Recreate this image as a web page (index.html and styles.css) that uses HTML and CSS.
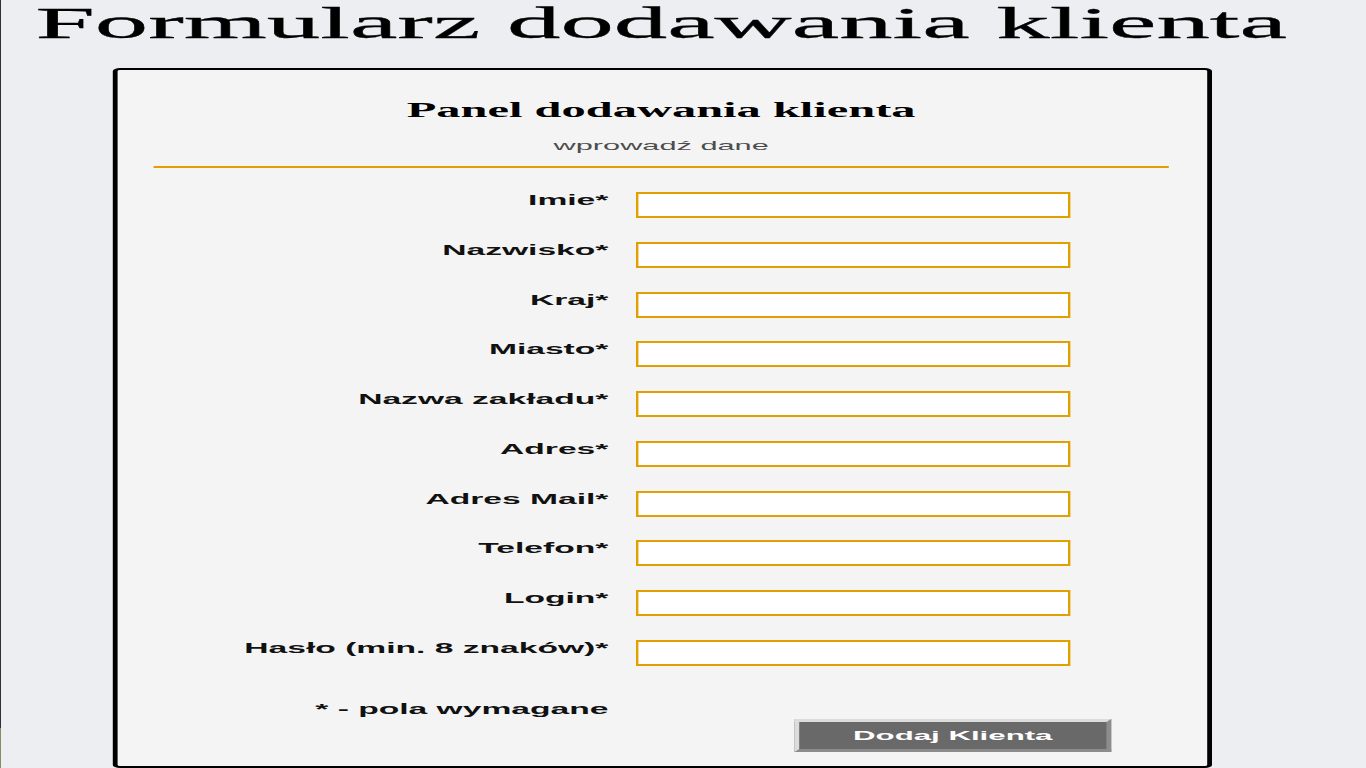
FILE: index.html
```html
<!DOCTYPE html>
<html lang="pl">
<head>
<meta charset="utf-8">
<title>Formularz dodawania klienta</title>
<link rel="stylesheet" href="styles.css">
</head>
<body>
<div class="stage">
  <h1 class="page-title">Formularz dodawania klienta</h1>
  <form class="panel" action="#">
    <h2 class="panel-title">Panel dodawania klienta</h2>
    <p class="panel-sub">wprowadź dane</p>
    <div class="divider"></div>
    <div class="fields">
      <label class="field-label" for="f-imie">Imie*</label>
      <input class="field-input" id="f-imie" type="text">
      <label class="field-label" for="f-nazwisko">Nazwisko*</label>
      <input class="field-input" id="f-nazwisko" type="text">
      <label class="field-label" for="f-kraj">Kraj*</label>
      <input class="field-input" id="f-kraj" type="text">
      <label class="field-label" for="f-miasto">Miasto*</label>
      <input class="field-input" id="f-miasto" type="text">
      <label class="field-label" for="f-zaklad">Nazwa zakładu*</label>
      <input class="field-input" id="f-zaklad" type="text">
      <label class="field-label" for="f-adres">Adres*</label>
      <input class="field-input" id="f-adres" type="text">
      <label class="field-label" for="f-mail">Adres Mail*</label>
      <input class="field-input" id="f-mail" type="text">
      <label class="field-label" for="f-telefon">Telefon*</label>
      <input class="field-input" id="f-telefon" type="text">
      <label class="field-label" for="f-login">Login*</label>
      <input class="field-input" id="f-login" type="text">
      <label class="field-label" for="f-haslo">Hasło (min. 8 znaków)*</label>
      <input class="field-input" id="f-haslo" type="password">
    </div>
    <div class="form-foot">
      <p class="required-note">* - pola wymagane</p>
      <button type="submit" class="submit-btn">Dodaj Klienta</button>
    </div>
  </form>
</div>
</body>
</html>
```

FILE: styles.css
```css
html,
body {
  margin: 0;
  height: 100%;
}

body {
  overflow: hidden;
  background:
    linear-gradient(#2d3038, #2d3038) 0 0 / 1px 728px no-repeat,
    linear-gradient(#8b8a62, #8b8a62) 0 728px / 1px 40px no-repeat,
    #edeef2;
  font-family: "Liberation Sans", Arial, sans-serif;
  color: #111;
}

/* the page is rendered narrow and stretched horizontally, as in the capture */
.stage {
  width: 551px;
  transform: scaleX(2.4);
  transform-origin: 0 0;
}

.page-title {
  margin: -1px 0 0;
  font: 400 44.5px/48px "Liberation Serif", "Times New Roman", serif;
  text-align: center;
  color: #000;
  -webkit-text-stroke: 0.3px #000;
}

.panel {
  box-sizing: border-box;
  width: 458px;
  height: 700px;
  margin: 21px auto 0;
  border: 2px solid #000;
  border-radius: 3px;
  background: #f4f4f4;
}

.panel-title {
  margin: 29px 0 0;
  font: 700 20.2px/23px "Liberation Serif", "Times New Roman", serif;
  text-align: center;
  color: #000;
}

.panel-sub {
  margin: 17px 0 0;
  font-size: 12.8px;
  line-height: 14px;
  text-align: center;
  color: #4d4d4d;
}

.divider {
  width: 423px;
  height: 2px;
  margin: 13px auto 0;
  background: #e0a100;
}

.fields {
  display: grid;
  grid-template-columns: 205px 181px;
  column-gap: 11.5px;
  row-gap: 23.78px;
  align-items: start;
  margin-top: 24px;
}

.field-label {
  font-weight: 700;
  font-size: 14px;
  line-height: 16px;
  text-align: right;
  color: #111;
}

.field-input {
  box-sizing: border-box;
  width: 181px;
  height: 26px;
  margin: 0;
  padding: 0 2px;
  border-style: solid;
  border-color: #e0a100;
  border-width: 2px 1px;
  background: #fff;
  font: 13px "Liberation Sans", Arial, sans-serif;
}

.form-foot {
  display: grid;
  grid-template-columns: 205px 1fr;
  column-gap: 11.5px;
  margin-top: 35px;
}

.required-note {
  grid-column: 1;
  grid-row: 1;
  margin: 0;
  font-weight: 700;
  font-size: 14px;
  line-height: 16px;
  text-align: right;
  color: #111;
}

.submit-btn {
  grid-column: 2;
  grid-row: 2;
  justify-self: start;
  box-sizing: border-box;
  width: 132px;
  height: 33px;
  margin: 2px 0 0 66px;
  padding: 0;
  border-style: solid;
  border-width: 3px 2px;
  border-color: #dcdcdc #8c8c8c #8c8c8c #dcdcdc;
  background: #696969;
  color: #fff;
  font: 700 13px "Liberation Sans", Arial, sans-serif;
}
```
